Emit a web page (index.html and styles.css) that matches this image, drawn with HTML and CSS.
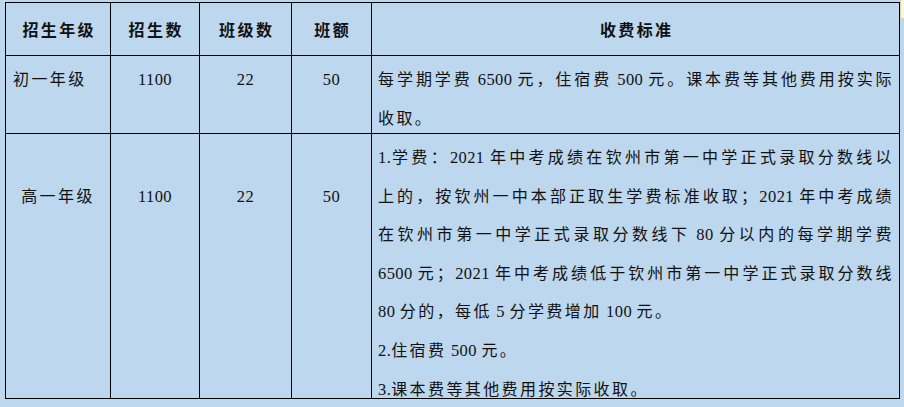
FILE: index.html
```html
<!DOCTYPE html>
<html lang="zh-CN">
<head>
<meta charset="utf-8">
<title>招生收费标准</title>
<link rel="stylesheet" href="styles.css">
</head>
<body>
<table class="fees">
  <colgroup>
    <col class="c1"><col class="c2"><col class="c3"><col class="c4"><col class="c5">
  </colgroup>
  <thead>
    <tr class="head">
      <th>招生年级</th>
      <th>招生数</th>
      <th>班级数</th>
      <th>班额</th>
      <th>收费标准</th>
    </tr>
  </thead>
  <tbody>
    <tr class="r1">
      <td class="left"><div class="in">初一年级</div></td>
      <td><div class="in"><span class="n">1100</span></div></td>
      <td><div class="in"><span class="n">22</span></div></td>
      <td><div class="in"><span class="n">50</span></div></td>
      <td class="text">
        <div class="in">
          <div class="ln j">每学期学费<span class="n"> 6500 </span>元，住宿费<span class="n"> 500 </span>元。课本费等其他费用按实际</div>
          <div class="ln">收取。</div>
        </div>
      </td>
    </tr>
    <tr class="r2">
      <td><div class="in mid">高一年级</div></td>
      <td><div class="in mid"><span class="n">1100</span></div></td>
      <td><div class="in mid"><span class="n">22</span></div></td>
      <td><div class="in mid"><span class="n">50</span></div></td>
      <td class="text">
        <div class="in">
          <div class="ln j"><span class="n">1.</span>学费：<span class="n">2021 </span>年中考成绩在钦州市第一中学正式录取分数线以</div>
          <div class="ln j">上的，按钦州一中本部正取生学费标准收取；<span class="n">2021 </span>年中考成绩</div>
          <div class="ln j">在钦州市第一中学正式录取分数线下<span class="n"> 80 </span>分以内的每学期学费</div>
          <div class="ln j"><span class="n">6500 </span>元；<span class="n">2021 </span>年中考成绩低于钦州市第一中学正式录取分数线</div>
          <div class="ln"><span class="n">80 </span>分的，每低<span class="n"> 5 </span>分学费增加<span class="n"> 100 </span>元。</div>
          <div class="ln"><span class="n">2.</span>住宿费<span class="n"> 500 </span>元。</div>
          <div class="ln"><span class="n">3.</span>课本费等其他费用按实际收取。</div>
        </div>
      </td>
    </tr>
  </tbody>
</table>
<div class="note"></div>
</body>
</html>
```
FILE: styles.css
```css
html, body {
  margin: 0;
  padding: 0;
}

body {
  position: relative;
  width: 904px;
  height: 407px;
  overflow: hidden;
  background: #bdd7ee;
  color: #111;
  font-family: "Liberation Serif", "Noto Sans CJK SC", serif;
}

.fees {
  border-collapse: collapse;
  table-layout: fixed;
  width: 894px;
  margin: 2px 0 0 5px;
  font-size: 16px;
}

col.c1 { width: 105px; }
col.c2 { width: 89px; }
col.c3 { width: 92px; }
col.c4 { width: 80px; }
col.c5 { width: 528px; }

.fees th,
.fees td {
  border: 1.5px solid #000;
  padding: 0;
}

.head th {
  height: 52px;
  font-family: "Noto Sans CJK SC", sans-serif;
  font-weight: 700;
  letter-spacing: 2.4px;
  padding-left: 2.4px;
  text-align: center;
  vertical-align: middle;
}

.r1 td {
  height: 77px;
  vertical-align: top;
  text-align: center;
}

.r2 td {
  height: 264px;
  vertical-align: top;
  text-align: center;
}

.in {
  box-sizing: border-box;
  line-height: 38.6px;
  padding-top: 5px;
  letter-spacing: 2.4px;
}

.r1 .in {
  height: 77px;
}

.r2 .in {
  height: 264px;
}

.in.mid {
  padding-top: 43.6px;
}

td.left {
  text-align: left;
  padding-left: 7px;
}

td.text {
  text-align: left;
  padding: 0 5px 0 6px;
}

.ln {
  white-space: nowrap;
}

.ln.j {
  text-align: justify;
  text-align-last: justify;
}

.n {
  font-size: 16.5px;
  letter-spacing: 0.4px;
}

.note {
  position: absolute;
  left: 900px;
  top: 0;
  width: 10px;
  height: 18px;
  background: #fbf4de;
  border-left: 1px solid #d9d0b4;
  border-bottom: 1px solid #d9d0b4;
}
```
